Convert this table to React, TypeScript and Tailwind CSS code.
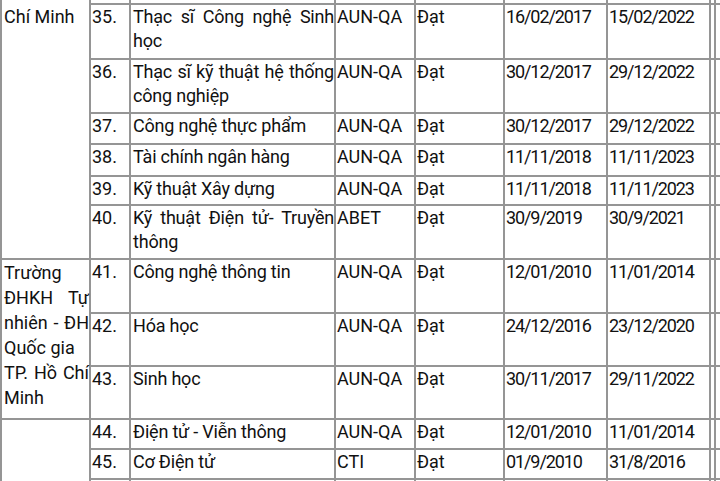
import React from "react";

type Row = {
  no: string;
  name: string;
  std: string;
  result: string;
  from: string;
  to: string;
  h: string;
};

// rows 34 and 46 are only cut slivers at the top and bottom edges
const rows: Row[] = [
  { no: "", name: "", std: "", result: "", from: "", to: "", h: "h-[30px]" },
  { no: "35.", name: "Thạc sĩ Công nghệ Sinh học", std: "AUN-QA", result: "Đạt", from: "16/02/2017", to: "15/02/2022", h: "h-[55px]" },
  { no: "36.", name: "Thạc sĩ kỹ thuật hệ thống công nghiệp", std: "AUN-QA", result: "Đạt", from: "30/12/2017", to: "29/12/2022", h: "h-[54px]" },
  { no: "37.", name: "Công nghệ thực phẩm", std: "AUN-QA", result: "Đạt", from: "30/12/2017", to: "29/12/2022", h: "h-[31px]" },
  { no: "38.", name: "Tài chính ngân hàng", std: "AUN-QA", result: "Đạt", from: "11/11/2018", to: "11/11/2023", h: "h-[32px]" },
  { no: "39.", name: "Kỹ thuật Xây dựng", std: "AUN-QA", result: "Đạt", from: "11/11/2018", to: "11/11/2023", h: "h-[29px]" },
  { no: "40.", name: "Kỹ thuật Điện tử- Truyền thông", std: "ABET", result: "Đạt", from: "30/9/2019", to: "30/9/2021", h: "h-[54px]" },
  { no: "41.", name: "Công nghệ thông tin", std: "AUN-QA", result: "Đạt", from: "12/01/2010", to: "11/01/2014", h: "h-[54px]" },
  { no: "42.", name: "Hóa học", std: "AUN-QA", result: "Đạt", from: "24/12/2016", to: "23/12/2020", h: "h-[53px]" },
  { no: "43.", name: "Sinh học", std: "AUN-QA", result: "Đạt", from: "30/11/2017", to: "29/11/2022", h: "h-[53px]" },
  { no: "44.", name: "Điện tử - Viễn thông", std: "AUN-QA", result: "Đạt", from: "12/01/2010", to: "11/01/2014", h: "h-[30px]" },
  { no: "45.", name: "Cơ Điện tử", std: "CTI", result: "Đạt", from: "01/9/2010", to: "31/8/2016", h: "h-[30px]" },
  { no: "", name: "", std: "", result: "", from: "", to: "", h: "h-[30px]" },
];

const td = "border-2 border-[#959595] align-top p-0 pl-[1px] leading-[24px]";

function SchoolCell({ index }: { index: number }) {
  if (index === 0) {
    return (
      <td rowSpan={7} className={`${td} pl-[2px] leading-[25px]`}>
        <div className="pt-[29px]">Chí Minh</div>
      </td>
    );
  }
  if (index === 7) {
    return (
      <td rowSpan={3} className={`${td} pl-[2px] leading-[25px] text-justify`}>
        <p>Trường ĐHKH Tự nhiên - ĐH Quốc gia</p>
        <p>TP. Hồ Chí Minh</p>
      </td>
    );
  }
  if (index === 10) {
    return <td rowSpan={3} className={td}></td>;
  }
  return null;
}

export default function App() {
  return (
    <div className="h-[481px] w-[720px] overflow-hidden bg-white">
      <table
        className="mt-[-27px] w-[830px] table-fixed border-collapse text-[18px] text-[#111]"
        style={{ fontFamily: "Roboto, 'Noto Sans', sans-serif" }}
      >
        <colgroup>
          <col className="w-[89px]" />
          <col className="w-[40px]" />
          <col className="w-[205px]" />
          <col className="w-[80px]" />
          <col className="w-[89px]" />
          <col className="w-[103px]" />
          <col className="w-[103px]" />
          <col className="w-[5px]" />
          <col className="w-[116px]" />
        </colgroup>
        <tbody>
          {rows.map((r, i) => (
            <tr key={i} className={r.h}>
              <SchoolCell index={i} />
              <td className={td}>{r.no}</td>
              <td className={`${td} pl-[2px] text-justify tracking-[-0.2px]`}>{r.name}</td>
              <td className={td}>{r.std}</td>
              <td className={td}>{r.result}</td>
              <td className={`${td} tracking-[-1.1px]`}>{r.from}</td>
              <td className={`${td} tracking-[-1.1px]`}>{r.to}</td>
              <td className={td}></td>
              <td className={td}></td>
            </tr>
          ))}
        </tbody>
      </table>
    </div>
  );
}
